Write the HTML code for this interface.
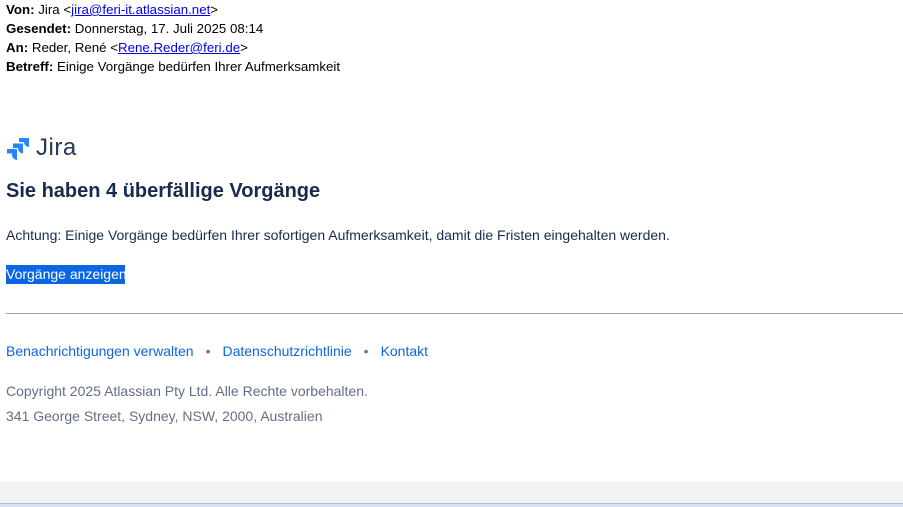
<!DOCTYPE html>
<html><head><meta charset="utf-8"><style>
body{margin:0;width:903px;height:507px;overflow:hidden;background:#fff;font-family:"Liberation Sans",sans-serif;position:relative}
.a{position:absolute;left:6px;white-space:nowrap}
.h{font-size:13.3px;color:#000}
.h a{color:#0000ee;text-decoration:underline}
b{font-weight:bold}
</style></head><body>
<div class="a h" style="top:2px"><b>Von:</b> Jira &lt;<a>jira@feri-it.atlassian.net</a>&gt;</div>
<div class="a h" style="top:21px"><b>Gesendet:</b> Donnerstag, 17. Juli 2025 08:14</div>
<div class="a h" style="top:40px"><b>An:</b> Reder, René &lt;<a>Rene.Reder@feri.de</a>&gt;</div>
<div class="a h" style="top:59px"><b>Betreff:</b> Einige Vorgänge bedürfen Ihrer Aufmerksamkeit</div>
<svg style="position:absolute;left:6px;top:138px" width="24" height="22" viewBox="0 0 24 22">
<path d="M13 0h10v9a5 5 0 0 1-5-5V4h-5z" fill="#2684ff"/>
<path d="M7 5.5h10v10a5 5 0 0 1-5-5v-0.5H7z" fill="#2684ff"/>
<path d="M1 11h10v11a5 5 0 0 1-5-5v-1.5H1z" fill="#2684ff"/>
</svg>
<div class="a" style="left:36px;top:134px;font-size:24px;color:#253858;letter-spacing:0.5px">Jira</div>
<div class="a" style="top:180px;font-size:20px;font-weight:bold;color:#172b4d">Sie haben 4 überfällige Vorgänge</div>
<div class="a" style="top:227px;font-size:14px;color:#172b4d">Achtung: Einige Vorgänge bedürfen Ihrer sofortigen Aufmerksamkeit, damit die Fristen eingehalten werden.</div>
<div class="a" style="top:265px;height:19px;line-height:19px;width:119px;background:#0b66e4;color:#fff;font-size:14px">Vorgänge anzeigen</div>
<div style="position:absolute;left:6px;right:0;top:313px;height:1px;background:#a5a5a5"></div>
<div class="a" style="top:343px;font-size:14px;color:#0c66e4">Benachrichtigungen verwalten<span style="color:#6b778c;margin:0 12px">•</span>Datenschutzrichtlinie<span style="color:#6b778c;margin:0 12px">•</span>Kontakt</div>
<div class="a" style="top:383px;font-size:14px;color:#626f86">Copyright 2025 Atlassian Pty Ltd. Alle Rechte vorbehalten.</div>
<div class="a" style="top:408px;font-size:14px;color:#626f86">341 George Street, Sydney, NSW, 2000, Australien</div>
<div style="position:absolute;left:0;right:0;top:482px;height:21px;background:#f3f3f3"></div>
<div style="position:absolute;left:0;right:0;top:503px;height:1px;background:#b8bcc8"></div>
<div style="position:absolute;left:0;right:0;top:504px;height:3px;background:#d6e2f6"></div>
</body></html>
